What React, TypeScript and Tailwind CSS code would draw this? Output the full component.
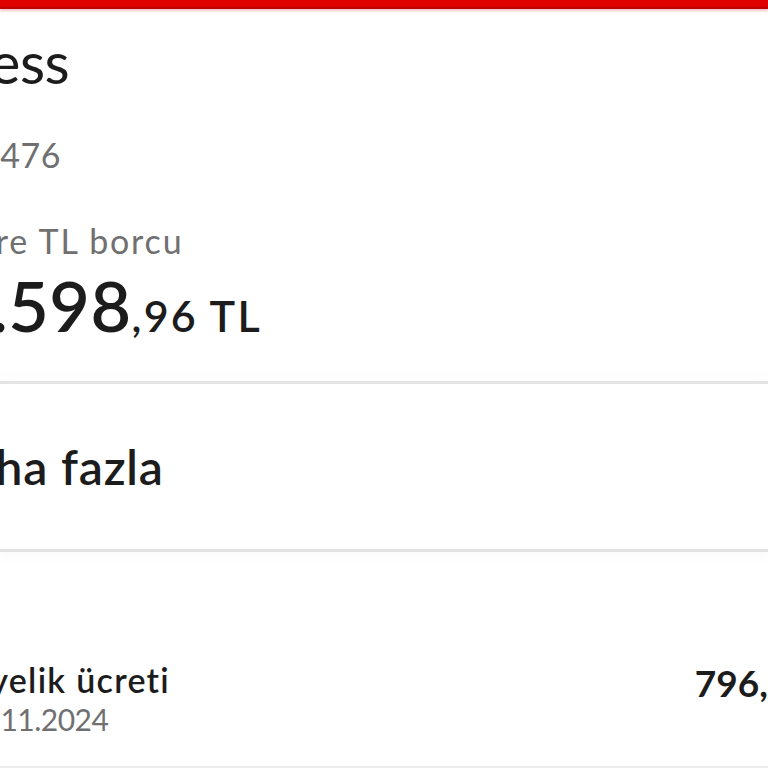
import React from "react";

const App = () => {
  return (
    <div
      className="w-[768px] h-[768px] overflow-hidden bg-white flex flex-col text-[#1c1c1c]"
      style={{ fontFamily: "Lato, 'Noto Sans', sans-serif" }}
    >
      <div className="h-[9px] bg-[#e10000] border-b-2 border-[#c00000] shadow-[0_2px_3px_rgba(225,0,0,0.25)] shrink-0" />

      <section className="flex flex-col pt-[24px] h-[372px] shrink-0 -ml-[76px]">
        <h1 className="text-[58px] leading-none font-normal tracking-[-0.5px]">Axess</h1>
        <p className="mt-[47px] text-[34px] leading-none text-[#707070] -ml-[34px] tracking-[0.5px]">•••• 2476</p>
        <p className="mt-[52px] text-[34px] leading-none text-[#707070] ml-[1px] tracking-[1.8px]">Ekstre TL borcu</p>
        <div className="mt-[12px] flex items-baseline leading-none font-semibold -ml-[15px]">
          <span className="text-[70px] tracking-[0.5px]">12.598</span>
          <span className="text-[43px] tracking-[2.2px]">,96 TL</span>
        </div>
      </section>

      <div className="h-[3px] bg-[#e4e4e4] shadow-[0_-6px_8px_rgba(0,0,0,0.03)] shrink-0" />

      <section className="h-[165px] flex items-center shrink-0 -ml-[66px]">
        <p className="text-[48px] leading-none font-semibold tracking-[0.8px]">Daha fazla</p>
      </section>

      <div className="h-[3px] bg-[#e2e2e2] shadow-[0_4px_10px_rgba(0,0,0,0.06)] shrink-0" />

      <section className="flex-1 flex flex-col">
        <div className="flex-1 flex items-center justify-between pt-[104px] pb-[26px] border-b-2 border-[#ececec]">
          <div className="flex flex-col gap-[7px]">
            <p className="text-[34px] leading-none font-semibold -ml-[36px] tracking-[1.3px]">Üyelik ücreti</p>
            <p className="text-[30px] leading-none text-[#707070] -ml-[40px] tracking-[-0.5px]">29.11.2024</p>
          </div>
          <p className="self-start mt-[8px] text-[37px] leading-none font-bold whitespace-nowrap -mr-[92px]">
            796,00 TL
          </p>
        </div>
      </section>
    </div>
  );
};

export default App;
